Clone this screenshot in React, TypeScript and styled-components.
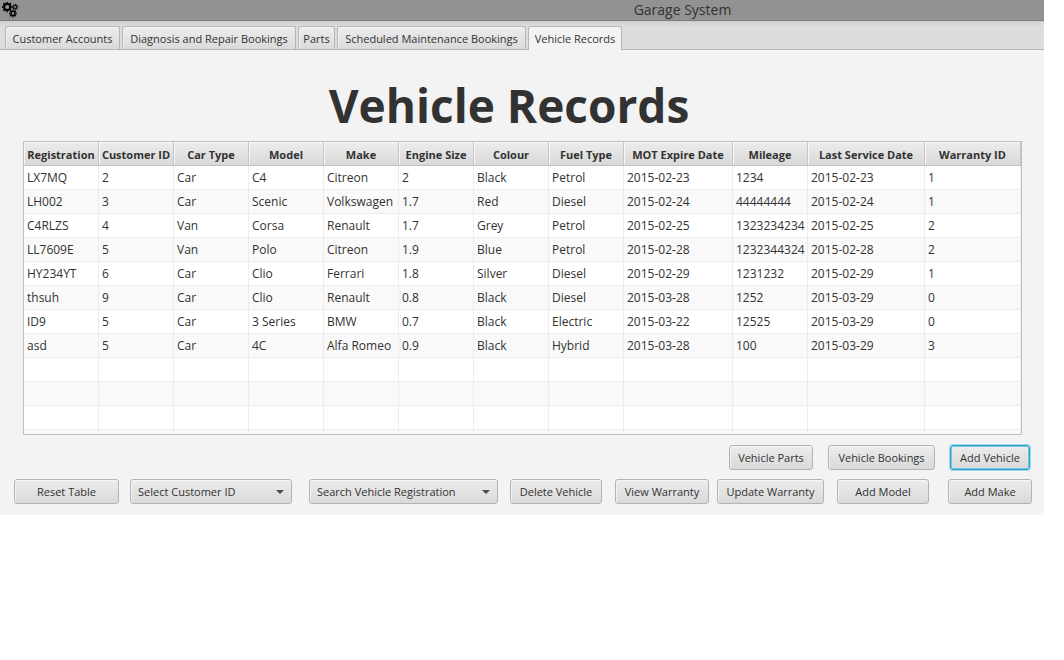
import React from "react";
import styled, { createGlobalStyle, css } from "styled-components";

const GlobalStyle = createGlobalStyle`
  *, *::before, *::after { box-sizing: border-box; }
  body {
    margin: 0;
    background: #fff;
    color: #323232;
    font: 12px/16px "Open Sans", "Noto Sans", sans-serif;
  }
`;

const Window = styled.main`
  margin-right: 20px;
  padding-bottom: 11px;
  background: #f3f3f3;
`;

const TitleBar = styled.header`
  display: flex;
  align-items: center;
  height: 21px;
  padding-left: 2px;
  background: #929292;
  border-bottom: 1px solid #7c7c7c;
`;

const WindowTitle = styled.div`
  flex: 1;
  padding-left: 302px;
  text-align: center;
  font-size: 14px;
  line-height: 20px;
`;

const TabStrip = styled.div`
  display: flex;
  align-items: flex-end;
  gap: 2px;
  height: 29px;
  padding-left: 5px;
  background: linear-gradient(#cfcfcf, #dddddd 6px);
  border-bottom: 1px solid #b5b5b5;
`;

const Tab = styled.button<{ $width: number; $active?: boolean }>`
  width: ${(p) => p.$width}px;
  height: 23px;
  padding: 2px 0 0;
  border: 1px solid #b5b5b5;
  border-bottom: 0;
  border-radius: 3px 3px 0 0;
  background: linear-gradient(#ededed, #dadada);
  box-shadow: inset 0 1px 0 #f8f8f8, inset 1px 0 0 #f1f1f1;
  color: inherit;
  font: inherit;
  font-size: 11px;
  white-space: nowrap;
  ${(p) =>
    p.$active &&
    css`
      height: 24px;
      margin-bottom: -1px;
      padding-bottom: 1px;
      background: #f3f3f3;
      box-shadow: none;
    `}
`;

const Heading = styled.h1`
  margin: 0;
  padding: 23px 26px 4px 0;
  text-align: center;
  font-size: 46px;
  line-height: 64px;
  font-weight: 700;
`;

const TableFrame = styled.div`
  height: 294px;
  margin: 0 22px 0 23px;
  overflow: hidden;
  background: #fff;
  border: 1px solid #c0c0c0;
`;

const RecordsTable = styled.table`
  width: 100%;
  table-layout: fixed;
  border-collapse: separate;
  border-spacing: 0;
`;

const HeadCell = styled.th`
  height: 24px;
  padding: 2px 0 0;
  border-right: 1px solid #c4c4c4;
  border-bottom: 1px solid #c0c0c0;
  background: linear-gradient(#ececec, #d9d9d9);
  box-shadow: inset 1px 1px 0 #f6f6f6;
  font-size: 11px;
  font-weight: 700;
  white-space: nowrap;
`;

const Row = styled.tr`
  background: #fff;
  &:nth-child(even) { background: #f9f9f9; }
`;

const Cell = styled.td`
  height: 24px;
  padding: 0 0 0 3px;
  border-right: 1px solid #ececec;
  border-bottom: 1px solid #ececec;
  white-space: nowrap;
`;

const controlStyle = css`
  height: 25px;
  padding: 0;
  border: 1px solid #b3b3b3;
  border-radius: 3px;
  background: linear-gradient(#ececec, #d9d9d9);
  box-shadow: inset 0 1px 0 #f8f8f8, inset 1px 0 0 #f1f1f1;
  color: inherit;
  font: inherit;
  font-size: 11px;
  white-space: nowrap;
`;

const Button = styled.button<{ $width?: number; $focused?: boolean }>`
  ${controlStyle}
  width: ${(p) => (p.$width ? `${p.$width}px` : "100%")};
  ${(p) =>
    p.$focused &&
    css`
      border-color: #2a9bc4;
      box-shadow: 0 0 0 1px #9fdcf2, inset 0 0 0 1px #7cc9e4;
    `}
`;

const RecordActions = styled.div`
  display: flex;
  justify-content: flex-end;
  gap: 15px;
  padding: 10px 14px 9px;
`;

const FooterActions = styled.div`
  display: grid;
  grid-template-columns:
    105fr 11fr 162fr 17fr 189fr 12fr 92fr 13fr
    94fr 8fr 107fr 13fr 92fr 19fr 84fr;
  padding: 0 12px 0 14px;
`;

const Slot = styled.div<{ $index: number }>`
  grid-column: ${(p) => p.$index * 2 + 1};
  min-width: 0;
`;

const SelectBox = styled.div`
  display: grid;
  align-items: center;
  > * { grid-area: 1 / 1; }
`;

const Select = styled.select`
  ${controlStyle}
  appearance: none;
  width: 100%;
  padding: 0 24px 0 7px;
`;

const Caret = styled.svg`
  justify-self: end;
  margin-right: 8px;
  pointer-events: none;
`;

const Gear = ({ x, y, r, hole, teeth }: { x: number; y: number; r: number; hole: number; teeth: number }) => (
  <g transform={`translate(${x} ${y})`}>
    <circle r={(r + hole) / 2} fill="none" stroke="#000" strokeWidth={r - hole} />
    <circle
      r={r + 0.5}
      fill="none"
      stroke="#000"
      strokeWidth="1.4"
      pathLength={teeth * 2}
      strokeDasharray="1 1"
      strokeDashoffset="0.5"
    />
  </g>
);

const Gears = () => (
  <svg width="17" height="17" viewBox="0 0 17 17" aria-hidden="true">
    <Gear x={5.2} y={5} r={4.1} hole={2.1} teeth={8} />
    <Gear x={13.2} y={5} r={2.1} hole={1} teeth={8} />
    <Gear x={11} y={11.4} r={2.8} hole={1.3} teeth={8} />
  </svg>
);

const tabs = [
  { label: "Customer Accounts", width: 115 },
  { label: "Diagnosis and Repair Bookings", width: 174 },
  { label: "Parts", width: 37 },
  { label: "Scheduled Maintenance Bookings", width: 189 },
  { label: "Vehicle Records", width: 94 },
];

const columns: { label: string; width?: number }[] = [
  { label: "Registration", width: 75 },
  { label: "Customer ID", width: 75 },
  { label: "Car Type", width: 75 },
  { label: "Model", width: 75 },
  { label: "Make", width: 75 },
  { label: "Engine Size", width: 75 },
  { label: "Colour", width: 75 },
  { label: "Fuel Type", width: 75 },
  { label: "MOT Expire Date", width: 109 },
  { label: "Mileage", width: 75 },
  { label: "Last Service Date", width: 117 },
  { label: "Warranty ID" },
];

const vehicles = [
  ["LX7MQ", "2", "Car", "C4", "Citreon", "2", "Black", "Petrol", "2015-02-23", "1234", "2015-02-23", "1"],
  ["LH002", "3", "Car", "Scenic", "Volkswagen", "1.7", "Red", "Diesel", "2015-02-24", "44444444", "2015-02-24", "1"],
  ["C4RLZS", "4", "Van", "Corsa", "Renault", "1.7", "Grey", "Petrol", "2015-02-25", "1323234234", "2015-02-25", "2"],
  ["LL7609E", "5", "Van", "Polo", "Citreon", "1.9", "Blue", "Petrol", "2015-02-28", "1232344324", "2015-02-28", "2"],
  ["HY234YT", "6", "Car", "Clio", "Ferrari", "1.8", "Silver", "Diesel", "2015-02-29", "1231232", "2015-02-29", "1"],
  ["thsuh", "9", "Car", "Clio", "Renault", "0.8", "Black", "Diesel", "2015-03-28", "1252", "2015-03-29", "0"],
  ["ID9", "5", "Car", "3 Series", "BMW", "0.7", "Black", "Electric", "2015-03-22", "12525", "2015-03-29", "0"],
  ["asd", "5", "Car", "4C", "Alfa Romeo", "0.9", "Black", "Hybrid", "2015-03-28", "100", "2015-03-29", "3"],
];

const blankRows = Array.from({ length: 4 }, () => columns.map(() => ""));

const DropDown = ({ label }: { label: string }) => (
  <SelectBox>
    <Select aria-label={label} defaultValue="">
      <option value="">{label}</option>
    </Select>
    <Caret width="8" height="4" viewBox="0 0 8 4" aria-hidden="true">
      <path d="M0 0h8L4 4z" fill="#4c4c4c" />
    </Caret>
  </SelectBox>
);

const footer = [
  <Button>Reset Table</Button>,
  <DropDown label="Select Customer ID" />,
  <DropDown label="Search Vehicle Registration" />,
  <Button>Delete Vehicle</Button>,
  <Button>View Warranty</Button>,
  <Button>Update Warranty</Button>,
  <Button>Add Model</Button>,
  <Button>Add Make</Button>,
];

export default function App() {
  return (
    <>
      <GlobalStyle />
      <Window>
        <TitleBar>
          <Gears />
          <WindowTitle>Garage System</WindowTitle>
        </TitleBar>
        <TabStrip role="tablist">
          {tabs.map((tab) => {
            const active = tab.label === "Vehicle Records";
            return (
              <Tab key={tab.label} role="tab" aria-selected={active} $width={tab.width} $active={active}>
                {tab.label}
              </Tab>
            );
          })}
        </TabStrip>
        <Heading>Vehicle Records</Heading>
        <TableFrame>
          <RecordsTable>
            <colgroup>
              {columns.map((c) => (
                <col key={c.label} width={c.width} />
              ))}
            </colgroup>
            <thead>
              <tr>
                {columns.map((c) => (
                  <HeadCell key={c.label} scope="col">{c.label}</HeadCell>
                ))}
              </tr>
            </thead>
            <tbody>
              {[...vehicles, ...blankRows].map((row, r) => (
                <Row key={r}>
                  {row.map((value, c) => (
                    <Cell key={c}>{value}</Cell>
                  ))}
                </Row>
              ))}
            </tbody>
          </RecordsTable>
        </TableFrame>
        <RecordActions>
          <Button $width={84}>Vehicle Parts</Button>
          <Button $width={107}>Vehicle Bookings</Button>
          <Button $width={80} $focused>Add Vehicle</Button>
        </RecordActions>
        <FooterActions>
          {footer.map((control, i) => (
            <Slot key={i} $index={i}>{control}</Slot>
          ))}
        </FooterActions>
      </Window>
    </>
  );
}
